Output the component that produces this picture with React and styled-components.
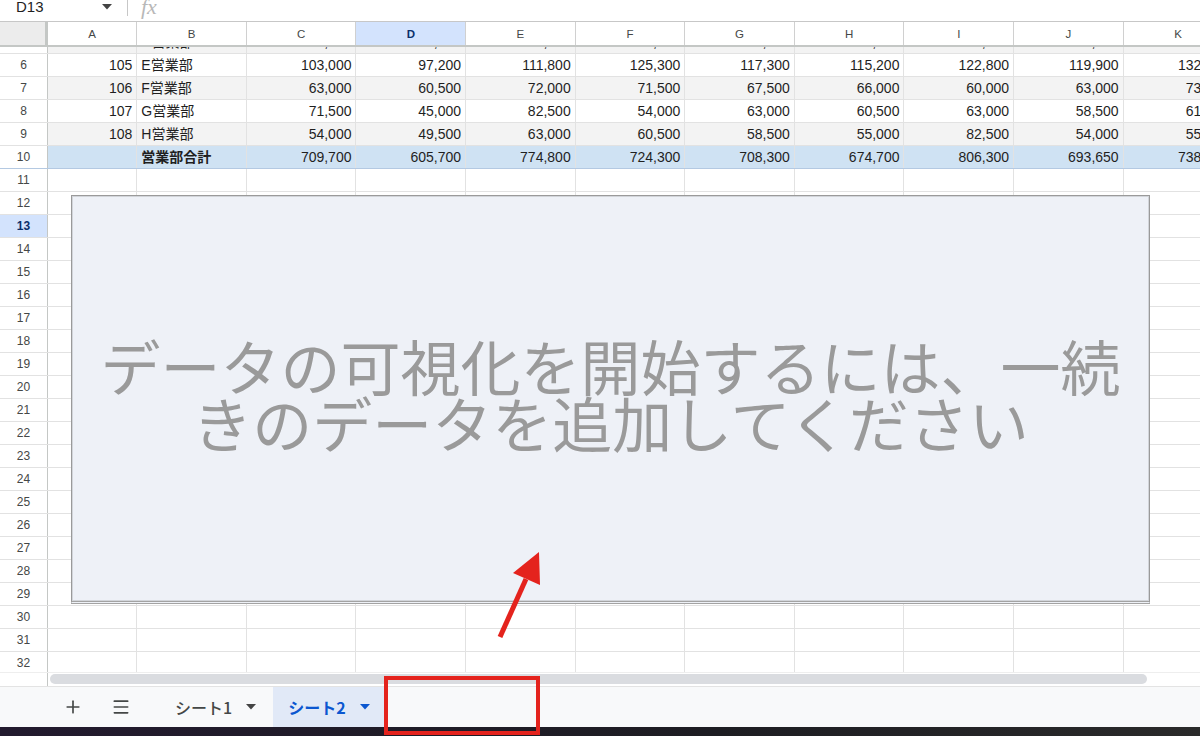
import React from "react";
import styled, { createGlobalStyle } from "styled-components";
import { Plus, Menu } from "lucide-react";

const GlobalStyle = createGlobalStyle`
  html, body {
    margin: 0;
    padding: 0;
    overflow: hidden;
    background: #ffffff;
  }
  body {
    font-family: "Liberation Sans", "Noto Sans CJK JP", Arial, sans-serif;
  }
`;

const COLUMNS = ["A", "B", "C", "D", "E", "F", "G", "H", "I", "J", "K"];
const TEMPLATE = "48px 89.3px repeat(9, 109.6px) 110px";

// rows 5 - 10 hold data, row 5 is scrolled half out of view
const DATA = [
  { n: 5, id: "104", name: "D営業部", values: ["85,500", "72,000", "91,500", "88,000", "79,500", "82,000", "96,500", "87,300", "94,200"] },
  { n: 6, id: "105", name: "E営業部", values: ["103,000", "97,200", "111,800", "125,300", "117,300", "115,200", "122,800", "119,900", "132,400"] },
  { n: 7, id: "106", name: "F営業部", values: ["63,000", "60,500", "72,000", "71,500", "67,500", "66,000", "60,000", "63,000", "73,500"] },
  { n: 8, id: "107", name: "G営業部", values: ["71,500", "45,000", "82,500", "54,000", "63,000", "60,500", "63,000", "58,500", "61,500"] },
  { n: 9, id: "108", name: "H営業部", values: ["54,000", "49,500", "63,000", "60,500", "58,500", "55,000", "82,500", "54,000", "55,500"] },
  { n: 10, id: "", name: "営業部合計", total: true, values: ["709,700", "605,700", "774,800", "724,300", "708,300", "674,700", "806,300", "693,650", "738,900"] },
];

const EMPTY_ROWS = Array.from({ length: 22 }, (_, i) => i + 11);
const SELECTED_ROW = 13;
const SELECTED_COL = "D";

export default function App() {
  return (
    <>
      <GlobalStyle />
      <Screen>
        <TopBar>
          <NameBox>
            D13
            <Caret $color="#444" />
          </NameBox>
          <BarDivider />
          <Fx>fx</Fx>
        </TopBar>

        <HeaderRow>
          <Corner />
          {COLUMNS.map((c) => (
            <ColHeader key={c} $selected={c === SELECTED_COL}>
              {c}
            </ColHeader>
          ))}
        </HeaderRow>

        <Viewport>
          <RowsTrack>
            {DATA.map((r) => (
              <Row key={r.n} $tone={r.total ? "total" : r.n % 2 ? "alt" : "plain"}>
                <RowLabel>{r.n}</RowLabel>
                <Cell $align="right">{r.id}</Cell>
                <Cell $bold={r.total}>{r.name}</Cell>
                {r.values.map((v, i) => (
                  <Cell key={i} $align="right">
                    {v}
                  </Cell>
                ))}
              </Row>
            ))}
            {EMPTY_ROWS.map((n) => (
              <Row key={n} $tone="plain">
                <RowLabel $selected={n === SELECTED_ROW}>{n}</RowLabel>
                {COLUMNS.map((c) => (
                  <Cell key={c} />
                ))}
              </Row>
            ))}
          </RowsTrack>

          <Chart>
            <ChartMessage>
              データの可視化を開始するには、一続
              <br />
              きのデータを追加してください
            </ChartMessage>
          </Chart>
        </Viewport>

        <ScrollRow>
          <ScrollCorner />
          <ScrollThumb />
        </ScrollRow>

        <TabBar>
          <IconButton>
            <Plus size={20} strokeWidth={2} />
          </IconButton>
          <IconButton>
            <Menu size={20} strokeWidth={2} />
          </IconButton>
          <TabList>
            <Tab>
              シート1
              <Caret $color="#444" />
            </Tab>
            <Tab $active>
              シート2
              <Caret $color="#0b57d0" />
            </Tab>
          </TabList>
        </TabBar>
        <BottomStrip />

        <Highlight />
        <ArrowMark width="60" height="100" viewBox="0 0 60 100">
          <line x1="10" y1="92" x2="36" y2="34" stroke="#e4231d" strokeWidth="5" strokeLinecap="butt" />
          <polygon points="49,7 23,28 50,40" fill="#e4231d" />
        </ArrowMark>
      </Screen>
    </>
  );
}

function Caret({ $color }) {
  return (
    <CaretSvg width="10" height="6" viewBox="0 0 10 6">
      <polygon points="0,0 10,0 5,5.5" fill={$color} />
    </CaretSvg>
  );
}

// Styled Components

const Screen = styled.div`
  position: relative;
  width: 1200px;
  height: 736px;
  overflow: hidden;
  display: flex;
  flex-direction: column;
  background: #ffffff;
`;

const TopBar = styled.div`
  height: 22px;
  flex: none;
  display: flex;
  align-items: flex-start;
  border-bottom: 1px solid #c7c7c7;
  box-sizing: border-box;
`;

const NameBox = styled.div`
  width: 112px;
  padding-left: 16px;
  box-sizing: border-box;
  display: flex;
  align-items: center;
  justify-content: space-between;
  font-size: 15px;
  line-height: 13px;
  color: #1f1f1f;
`;

const CaretSvg = styled.svg`
  flex: none;
  display: block;
`;

const BarDivider = styled.div`
  width: 1px;
  height: 16px;
  margin-left: 15px;
  background: #c7c7c7;
`;

const Fx = styled.div`
  margin-left: 13px;
  font-family: "Liberation Serif", serif;
  font-style: italic;
  font-size: 22px;
  line-height: 14px;
  color: #b8b8b8;
`;

const HeaderRow = styled.div`
  height: 25px;
  flex: none;
  display: grid;
  grid-template-columns: ${TEMPLATE};
  border-bottom: 2px solid #c4c7c5;
  box-sizing: border-box;
`;

const Corner = styled.div`
  background: #ececec;
  border-right: 3px solid #c4c7c5;
`;

const ColHeader = styled.div`
  display: flex;
  align-items: center;
  justify-content: center;
  font-size: 11.5px;
  color: ${(p) => (p.$selected ? "#0b2f6b" : "#444746")};
  font-weight: ${(p) => (p.$selected ? 700 : 400)};
  background: ${(p) => (p.$selected ? "#d3e3fd" : "#ffffff")};
  border-right: 1px solid #d0d0d0;
`;

const Viewport = styled.div`
  position: relative;
  height: 625px;
  flex: none;
  overflow: hidden;
`;

const RowsTrack = styled.div`
  margin-top: -16px;
`;

const toneBg = {
  plain: "#ffffff",
  alt: "#f3f3f3",
  total: "#cfe2f3",
};

const Row = styled.div`
  height: 23px;
  display: grid;
  grid-template-columns: ${TEMPLATE};
  background: ${(p) => toneBg[p.$tone]};
  border-bottom: 1px solid ${(p) => (p.$tone === "total" ? "#b4c9e2" : "#e2e2e2")};
  box-sizing: border-box;
`;

const RowLabel = styled.div`
  display: flex;
  align-items: center;
  justify-content: center;
  font-size: 12px;
  color: ${(p) => (p.$selected ? "#0b2f6b" : "#444746")};
  font-weight: ${(p) => (p.$selected ? 700 : 400)};
  background: ${(p) => (p.$selected ? "#d3e3fd" : "#ffffff")};
  border-right: 1px solid #c4c7c5;
`;

const Cell = styled.div`
  padding: 0 4px;
  font-size: 14px;
  line-height: 22px;
  color: #1f1f1f;
  text-align: ${(p) => p.$align || "left"};
  font-weight: ${(p) => (p.$bold ? 700 : 400)};
  white-space: nowrap;
  overflow: hidden;
  border-right: 1px solid #e2e2e2;
`;

const Chart = styled.div`
  position: absolute;
  left: 71px;
  top: 148px;
  width: 1079px;
  height: 409px;
  box-sizing: border-box;
  background: #eef1f7;
  border: 1px solid #9a9a9a;
  border-bottom: 3px double #a3a3a3;
  box-shadow: inset 0 0 0 1px #d2d5da;
  display: flex;
  align-items: center;
  justify-content: center;
`;

const ChartMessage = styled.div`
  font-family: "Noto Sans CJK JP", sans-serif;
  font-size: 60px;
  line-height: 57px;
  color: #9a9a9a;
  text-align: center;
  margin-top: -12px;
`;

const ScrollRow = styled.div`
  height: 14px;
  flex: none;
  display: flex;
  align-items: center;
  background: #ffffff;
  border-top: 1px solid #eeeeee;
  box-sizing: border-box;
`;

const ScrollCorner = styled.div`
  width: 48px;
  height: 100%;
  border-right: 1px solid #c4c7c5;
  box-sizing: border-box;
`;

const ScrollThumb = styled.div`
  margin-left: 2px;
  margin-top: -2px;
  width: 1097px;
  height: 10px;
  border-radius: 5px;
  background: #dadce0;
`;

const TabBar = styled.div`
  height: 41px;
  flex: none;
  display: flex;
  align-items: stretch;
  padding-left: 53px;
  gap: 8px;
  background: #f8f9fa;
  border-top: 1px solid #e3e3e3;
  box-sizing: border-box;
`;

const IconButton = styled.div`
  width: 40px;
  display: flex;
  align-items: center;
  justify-content: center;
  color: #444746;
`;

const TabList = styled.div`
  display: flex;
  margin-left: 11px;
`;

const Tab = styled.div`
  display: flex;
  align-items: center;
  gap: 14px;
  padding: 0 17px 0 15px;
  font-size: 16px;
  font-family: "Noto Sans CJK JP", sans-serif;
  font-weight: ${(p) => (p.$active ? 700 : 500)};
  color: ${(p) => (p.$active ? "#0b57d0" : "#444746")};
  background: ${(p) => (p.$active ? "#e1e9f7" : "transparent")};
`;

const BottomStrip = styled.div`
  flex: 1;
  background: linear-gradient(90deg, #221a2e, #1d1d22 60%, #2a2a2a);
`;

const Highlight = styled.div`
  position: absolute;
  left: 384px;
  top: 676px;
  width: 156px;
  height: 59px;
  box-sizing: border-box;
  border: 4px solid #e4231d;
`;

const ArrowMark = styled.svg`
  position: absolute;
  left: 490px;
  top: 545px;
`;
